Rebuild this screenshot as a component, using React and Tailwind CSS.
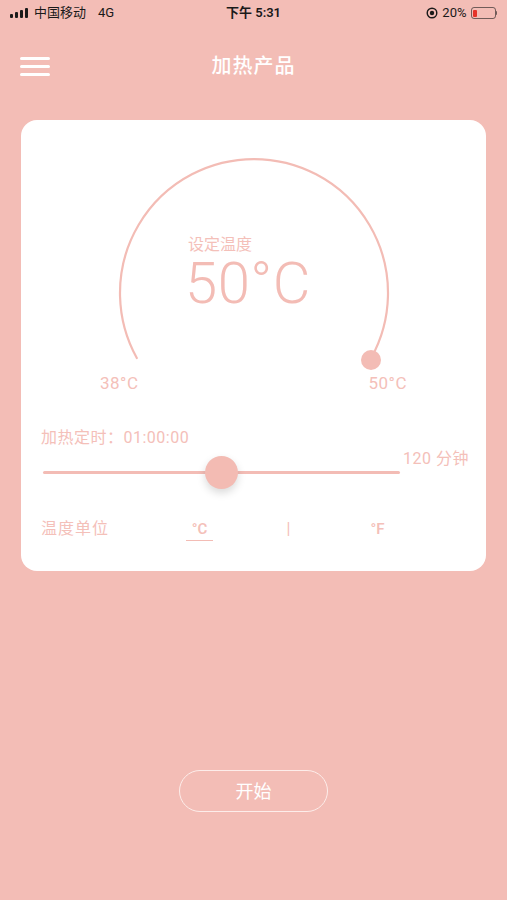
import React from "react";

const F = { fontFamily: 'Roboto, "Noto Sans CJK SC", sans-serif' };

function StatusBar() {
  return (
    <div className="h-[26px] flex items-center px-[10px] text-[13px] text-[#1a1a1a] relative" style={F}>
      <div className="flex items-center gap-[6px] flex-1">
        <div className="flex items-end gap-[2px] h-[10px]">
          <div className="w-[3px] h-[4px] bg-[#1a1a1a] rounded-[1px]" />
          <div className="w-[3px] h-[6px] bg-[#1a1a1a] rounded-[1px]" />
          <div className="w-[3px] h-[8px] bg-[#1a1a1a] rounded-[1px]" />
          <div className="w-[3px] h-[10px] bg-[#1a1a1a] rounded-[1px]" />
        </div>
        <span>中国移动</span>
        <span className="ml-[6px]">4G</span>
      </div>
      <div className="font-semibold">下午 5:31</div>
      <div className="flex-1 flex items-center justify-end gap-[4px]">
        <svg width="12" height="12" viewBox="0 0 12 12">
          <circle cx="6" cy="6" r="4.8" fill="none" stroke="#1a1a1a" strokeWidth="1.4" />
          <circle cx="6" cy="6" r="2.2" fill="#1a1a1a" />
        </svg>
        <span>20%</span>
        <div className="flex items-center">
          <div className="w-[25px] h-[12px] border border-[#1a1a1a]/60 rounded-[3px] p-[1.5px]">
            <div className="w-[4px] h-full bg-[#e5332a] rounded-[1px]" />
          </div>
          <div className="w-[1.5px] h-[4px] bg-[#1a1a1a]/60 rounded-r" />
        </div>
      </div>
    </div>
  );
}

export default function App() {
  const pink = "#F3BCB5";
  return (
    <div className="w-[507px] h-[900px] bg-[#F3BDB6] flex flex-col" style={F}>
      <StatusBar />
      <div className="h-[82px] flex items-center px-[20px] relative pb-[2px]">
        <div className="flex flex-col gap-[5px] w-[30px]">
          <div className="h-[3px] bg-white rounded-full" />
          <div className="h-[3px] bg-white rounded-full" />
          <div className="h-[3px] bg-white rounded-full" />
        </div>
        <div className="flex-1 text-center text-white text-[20px] font-medium pr-[30px] tracking-[1px]">加热产品</div>
      </div>
      <div className="mx-[21px] mt-[12px] h-[451px] bg-white rounded-[16px] flex flex-col">
        <div className="relative h-[275px]">
          <svg className="absolute inset-0" width="466" height="275" viewBox="0 0 466 275">
            <path d="M 115.8 238 A 134 134 0 1 1 350.2 238" fill="none" stroke={pink} strokeWidth="2.2" strokeLinecap="round" />
            <circle cx="350" cy="240" r="10" fill={pink} />
          </svg>
          <div className="relative pl-[167px] pt-[114px] flex flex-col items-start">
            <span className="text-[16px] leading-[22px] text-[#F4C0B9]">设定温度</span>
            <span className="text-[58px] leading-[50px] font-light text-[#F3BCB5] -ml-[3px] mt-[2px] tracking-[0.5px]">50°C</span>
          </div>
          <div className="relative flex justify-between pl-[79px] pr-[79px] mt-[64px] text-[17px] leading-[22px] text-[#F4C0B9] tracking-[0.5px]">
            <span>38°C</span>
            <span>50°C</span>
          </div>
        </div>
        <div className="px-[20px] mt-[32px] text-[16px] leading-[22px] text-[#F4C0B9] tracking-[0.5px]">加热定时：01:00:00</div>
        <div className="flex items-start mt-[7px] pl-[22px]">
          <div className="relative w-[357px] h-[33px] flex items-center">
            <div className="w-full h-[3px] bg-[#F3BCB5] rounded-full" />
            <div className="absolute left-[162px] top-0 w-[33px] h-[33px] rounded-full bg-[#F3BBB3] shadow-[0_4px_8px_rgba(0,0,0,0.15)]" />
          </div>
          <span className="ml-[3px] -mt-[8px] text-[16px] leading-[22px] text-[#F4C0B9] tracking-[0.5px]">120 分钟</span>
        </div>
        <div className="flex items-start px-[20px] mt-[29px] text-[#F4C0B9]">
          <span className="text-[16px] leading-[22px] w-[142px] tracking-[1px]">温度单位</span>
          <div className="w-[33px] flex justify-center">
            <span className="text-[15px] leading-[22px] font-semibold border-b-[1.5px] border-[#F3BCB5] px-[6px]">°C</span>
          </div>
          <div className="w-[145px] flex justify-center text-[16px] leading-[22px]">|</div>
          <div className="w-[33px] flex justify-center text-[15px] leading-[22px] font-semibold">°F</div>
        </div>
      </div>
      <div className="flex justify-center mt-[199px]">
        <button className="w-[149px] h-[42px] rounded-full border-[1.5px] border-[#FDEDEA] text-white text-[18px]">开始</button>
      </div>
    </div>
  );
}
